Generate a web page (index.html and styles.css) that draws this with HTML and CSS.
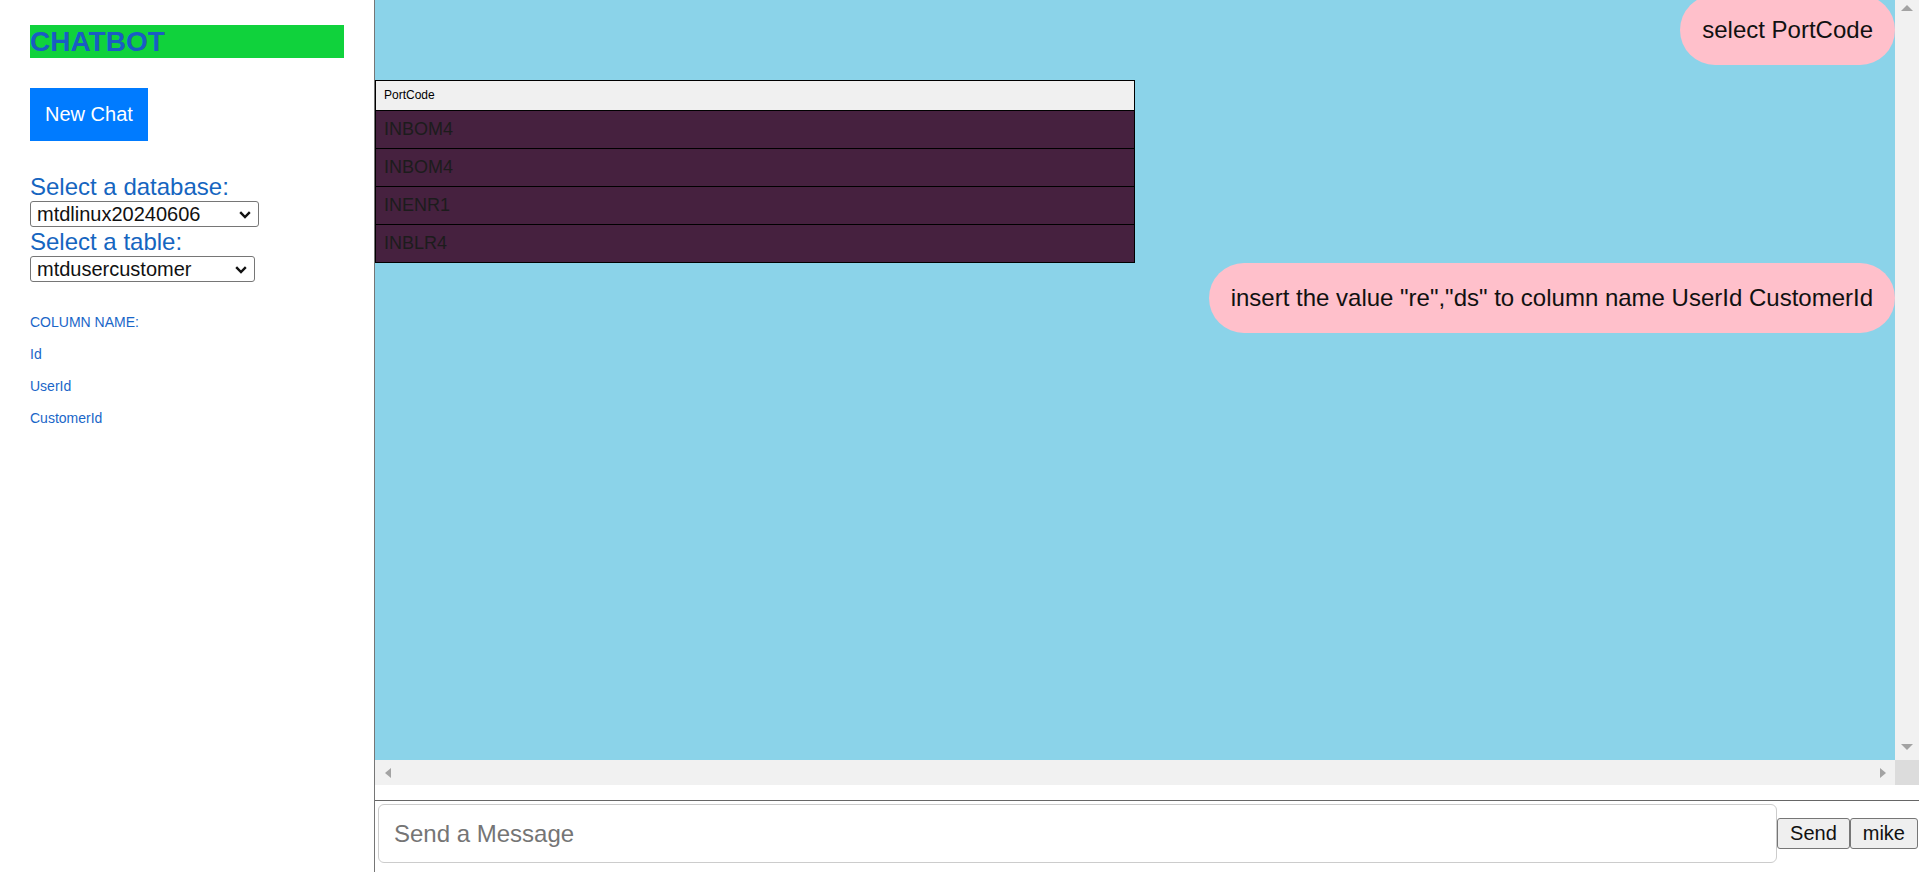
FILE: index.html
```html
<!DOCTYPE html>
<html lang="en">
<head>
<meta charset="utf-8">
<title>Chatbot</title>
<link rel="stylesheet" href="styles.css">
</head>
<body>
<div class="app">
  <aside class="sidebar">
    <h1 class="brand">CHATBOT</h1>
    <button class="new-chat" type="button">New Chat</button>
    <label class="field-label" for="db">Select a database:</label>
    <div class="picker-wrap picker-db">
      <select id="db" class="picker"><option>mtdlinux20240606</option></select>
      <svg class="chevron" width="12" height="8" viewBox="0 0 12 8" aria-hidden="true"><path d="M1.2 1.2 L6 6 L10.8 1.2" fill="none" stroke="#111" stroke-width="2.4"/></svg>
    </div>
    <label class="field-label" for="tbl">Select a table:</label>
    <div class="picker-wrap picker-table">
      <select id="tbl" class="picker"><option>mtdusercustomer</option></select>
      <svg class="chevron" width="12" height="8" viewBox="0 0 12 8" aria-hidden="true"><path d="M1.2 1.2 L6 6 L10.8 1.2" fill="none" stroke="#111" stroke-width="2.4"/></svg>
    </div>
    <div class="columns">
      <p class="col-item">COLUMN NAME:</p>
      <p class="col-item">Id</p>
      <p class="col-item">UserId</p>
      <p class="col-item">CustomerId</p>
    </div>
  </aside>
  <main class="main">
    <div class="chat-frame">
      <div class="chat">
        <div class="messages">
          <div class="bubble bubble-first">select PortCode</div>
          <table class="result">
            <thead><tr><th>PortCode</th></tr></thead>
            <tbody>
              <tr><td>INBOM4</td></tr>
              <tr><td>INBOM4</td></tr>
              <tr><td>INENR1</td></tr>
              <tr><td>INBLR4</td></tr>
            </tbody>
          </table>
          <div class="bubble">insert the value "re","ds" to column name UserId CustomerId</div>
        </div>
      </div>
      <div class="vscroll">
        <span class="arrow arrow-up"></span>
        <span class="arrow arrow-down"></span>
      </div>
      <div class="hscroll">
        <span class="arrow arrow-left"></span>
        <span class="arrow arrow-right"></span>
      </div>
      <div class="scroll-corner"></div>
    </div>
    <form class="composer">
      <input class="composer-input" type="text" placeholder="Send a Message">
      <button class="composer-btn" type="button">Send</button>
      <button class="composer-btn" type="button">mike</button>
    </form>
  </main>
</div>
</body>
</html>
```

FILE: styles.css
```css
* { box-sizing: border-box; }
html, body { margin: 0; padding: 0; height: 100%; }
body {
  font-family: "Liberation Sans", Arial, sans-serif;
  background: #ffffff;
  overflow: hidden;
}
button, input, select { font-family: "Liberation Sans", Arial, sans-serif; }

.app { display: flex; height: 872px; }

/* ---------- sidebar ---------- */
.sidebar {
  width: 375px;
  flex: none;
  border-right: 1px solid #767676;
  padding: 25px 30px 0 30px;
  background: #fff;
}
.brand {
  margin: 0;
  height: 33px;
  line-height: 33px;
  font-size: 28px;
  font-weight: bold;
  color: #1a5cc4;
  background: #10d23c;
}
.new-chat {
  display: block;
  margin-top: 30px;
  padding: 15px;
  font-size: 20px;
  line-height: 23px;
  border: none;
  color: #fff;
  background: #007bff;
}
.field-label {
  display: block;
  font-size: 24px;
  line-height: 29px;
  color: #1565c0;
}
.new-chat + .field-label { margin-top: 31px; }

.picker-wrap { position: relative; }
.picker-db { width: 229px; }
.picker-table { width: 225px; }
.picker {
  display: block;
  width: 100%;
  height: 26px;
  font-size: 20px;
  color: #111;
  background: #fff;
  border: 1px solid #767676;
  border-radius: 3px;
  padding: 0 24px 0 6px;
  -webkit-appearance: none;
  appearance: none;
}
.chevron {
  position: absolute;
  right: 8px;
  top: 10px;
  pointer-events: none;
}
.columns { margin-top: 32px; }
.col-item {
  margin: 0 0 16px 0;
  font-size: 14px;
  line-height: 16px;
  color: #1a66c8;
}

/* ---------- main ---------- */
.main {
  flex: 1;
  display: flex;
  flex-direction: column;
  min-width: 0;
}
.chat-frame {
  flex: 1;
  min-height: 0;
  display: grid;
  grid-template-columns: 1fr 24px;
  grid-template-rows: 1fr 25px;
}
.chat {
  overflow: hidden;
  background: #8bd3e9;
}
.vscroll {
  background: #f1f1f1;
  display: flex;
  flex-direction: column;
  justify-content: space-between;
  align-items: center;
  padding: 5px 0 10px 0;
}
.hscroll {
  background: #f1f1f1;
  display: flex;
  justify-content: space-between;
  align-items: center;
  padding: 0 9px 0 10px;
}
.scroll-corner { background: #dcdcdc; }
.arrow { display: block; width: 0; height: 0; }
.arrow-up {
  border-left: 6px solid transparent;
  border-right: 6px solid transparent;
  border-bottom: 6px solid #a3a3a3;
}
.arrow-down {
  border-left: 6px solid transparent;
  border-right: 6px solid transparent;
  border-top: 6px solid #a3a3a3;
}
.arrow-left {
  border-top: 5px solid transparent;
  border-bottom: 5px solid transparent;
  border-right: 6px solid #a3a3a3;
}
.arrow-right {
  border-top: 5px solid transparent;
  border-bottom: 5px solid transparent;
  border-left: 6px solid #a3a3a3;
}

.messages {
  display: flex;
  flex-direction: column;
  align-items: flex-end;
}
.bubble {
  background: #ffc0cb;
  color: #111;
  font-size: 24px;
  line-height: 28px;
  padding: 21px 22px;
  border-radius: 35px;
  white-space: nowrap;
}
.bubble-first { margin-top: -5px; margin-bottom: 15px; }

.result {
  align-self: flex-start;
  width: 50%;
  border-collapse: collapse;
}
.result th {
  background: #f0f0f0;
  font-size: 12px;
  line-height: 13px;
  font-weight: normal;
  text-align: left;
  color: #000;
  padding: 8px;
  border: 1px solid #000;
}
.result td {
  background: #46213f;
  color: #1c1c1c;
  font-size: 18px;
  line-height: 21px;
  padding: 8px;
  border: 1px solid #000;
}

/* ---------- composer ---------- */
.composer {
  flex: none;
  margin: 15px 0 0 0;
  border-top: 1px solid #666;
  height: 72px;
  padding: 3px 1px 0 3px;
  display: flex;
  align-items: flex-start;
}
.composer-input {
  flex: 1;
  min-width: 0;
  height: 59px;
  border: 1px solid #ccc;
  border-radius: 6px;
  padding: 0 15px;
  font-size: 24px;
  color: #333;
  background: #fff;
}
.composer-input::placeholder { color: #757575; }
.composer-btn {
  margin-top: 14px;
  height: 31px;
  padding: 0 12px;
  font-size: 20px;
  color: #111;
  background: #efefef;
  border: 1px solid #767676;
  border-radius: 3px;
}
```
